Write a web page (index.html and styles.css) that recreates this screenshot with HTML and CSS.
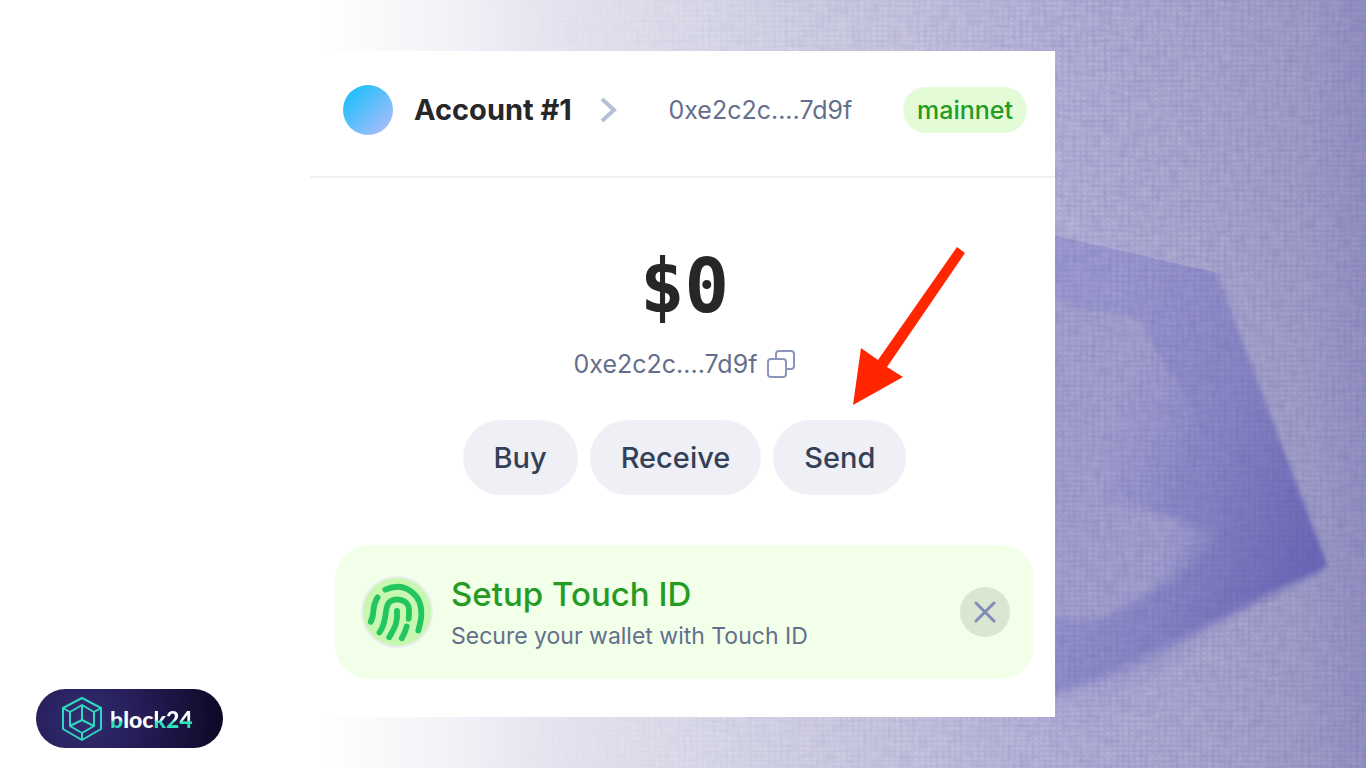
FILE: index.html
```html
<!DOCTYPE html>
<html lang="en">
<head>
  <meta charset="UTF-8" />
  <meta name="viewport" content="width=device-width, initial-scale=1.0"/>
  <title>Wallet</title>
  <link rel="stylesheet" href="styles.css">
</head>
<body>
  <div class="page">

    <!-- Backdrop -->
    <svg class="backdrop" viewBox="0 0 1366 768" preserveAspectRatio="xMaxYMid slice" aria-hidden="true">
      <defs>
        <linearGradient id="wash" x1="320" x2="1366" y1="0" y2="0" gradientUnits="userSpaceOnUse">
          <stop offset="0" stop-color="#ffffff"/>
          <stop offset="0.1" stop-color="#f5f5f9"/>
          <stop offset="0.2" stop-color="#e8e8f2"/>
          <stop offset="0.38" stop-color="#dadae9"/>
          <stop offset="0.55" stop-color="#cac8e0"/>
          <stop offset="0.7" stop-color="#b7b5da"/>
          <stop offset="0.85" stop-color="#acaad0"/>
          <stop offset="0.94" stop-color="#a3a1ca"/>
          <stop offset="1" stop-color="#9693c4"/>
        </linearGradient>
        <linearGradient id="outer" x1="1056" x2="1320" y1="440" y2="540" gradientUnits="userSpaceOnUse">
          <stop offset="0" stop-color="#9f9cd2"/>
          <stop offset="0.55" stop-color="#8a87c6"/>
          <stop offset="1" stop-color="#6d68b8"/>
        </linearGradient>
        <linearGradient id="glow" x1="1130" x2="1080" y1="600" y2="745" gradientUnits="userSpaceOnUse">
          <stop offset="0" stop-color="#9b98ce"/>
          <stop offset="1" stop-color="#9b98ce" stop-opacity="0"/>
        </linearGradient>
        <linearGradient id="inner" x1="1110" x2="1205" y1="390" y2="430" gradientUnits="userSpaceOnUse">
          <stop offset="0" stop-color="#a6a4d0"/>
          <stop offset="1" stop-color="#a6a4d0" stop-opacity="0"/>
        </linearGradient>
        <linearGradient id="low" x1="1110" x2="1220" y1="510" y2="550" gradientUnits="userSpaceOnUse">
          <stop offset="0" stop-color="#a5a3d0"/>
          <stop offset="0.5" stop-color="#a5a3d0"/>
          <stop offset="1" stop-color="#a5a3d0" stop-opacity="0"/>
        </linearGradient>
        <filter id="warp" x="0" y="0" width="100%" height="100%" color-interpolation-filters="sRGB">
          <feTurbulence type="fractalNoise" baseFrequency="0.25 0.06" numOctaves="1" seed="4"/>
          <feColorMatrix values="0 0 0 0 0.3  0 0 0 0 0.29  0 0 0 0 0.58  0 0 0 0.24 -0.09"/>
        </filter>
        <filter id="weft" x="0" y="0" width="100%" height="100%" color-interpolation-filters="sRGB">
          <feTurbulence type="fractalNoise" baseFrequency="0.06 0.25" numOctaves="1" seed="9"/>
          <feColorMatrix values="0 0 0 0 0.3  0 0 0 0 0.29  0 0 0 0 0.58  0 0 0 0.24 -0.09"/>
        </filter>
        <pattern id="threads" width="6" height="5" patternUnits="userSpaceOnUse">
          <path d="M0 0h2v5H0zM2 0h4v2H2z" fill="#4d4b91" fill-opacity="0.07"/>
        </pattern>
        <linearGradient id="fade" x1="480" x2="1100" y1="0" y2="0" gradientUnits="userSpaceOnUse">
          <stop offset="0" stop-color="#000"/>
          <stop offset="1" stop-color="#fff"/>
        </linearGradient>
        <mask id="weaveMask"><path d="M320 0h1046v768H320z" fill="url(#fade)"/></mask>
        <filter id="soft1"><feGaussianBlur stdDeviation="2"/></filter>
        <filter id="soft2"><feGaussianBlur stdDeviation="5"/></filter>
        <filter id="soft3"><feGaussianBlur stdDeviation="10"/></filter>
        <clipPath id="topEdge"><path d="M1000 223L1213 272L1366 300V768H1000z"/></clipPath>
      </defs>
      <path d="M320 0h1046v768H320z" fill="url(#wash)"/>
      <g clip-path="url(#topEdge)">
        <path d="M1040 560L1250 590L1170 660L1075 730H1040z" fill="url(#glow)" filter="url(#soft3)"/>
        <path d="M1040 215L1213 266L1324 568L1210 625L1110 675L1040 700z" fill="url(#outer)" filter="url(#soft2)"/>
        <path d="M1040 220L1213 268L1327 566L1240 600L1040 610z" fill="url(#outer)" filter="url(#soft1)"/>
        <path d="M1000 290L1125 316Q1142 320 1148 336L1205 430L1215 540L1120 500L1000 480z" fill="url(#inner)" filter="url(#soft1)"/>
        <path d="M1000 390H1090L1108 488Q1112 500 1130 504L1225 535L1170 580L1100 620H1000z" fill="url(#low)" filter="url(#soft2)"/>
      </g>
      <g mask="url(#weaveMask)">
        <path d="M320 0h1046v768H320z" fill="url(#threads)"/>
        <path d="M320 0h1046v768H320z" filter="url(#warp)"/>
        <path d="M320 0h1046v768H320z" filter="url(#weft)"/>
      </g>
    </svg>

    <div class="side">
      <a class="logo" href="#" aria-label="block24">
        <svg viewBox="0 0 40 46" width="40" height="46" fill="none" stroke="#2fd9c0" stroke-width="2" stroke-linejoin="round" aria-hidden="true">
          <path d="M20 2L39 12V33L20 44L1 33V12z"/>
          <path d="M8 16L20 9L32 16V30L20 37L8 30z"/>
          <path d="M20 9V24M8 30L20 24L32 30M1 12L8 16M39 12L32 16M20 37V44"/>
        </svg>
        <span class="logo-text"><span class="tint-b">b</span>loc<span class="tint">k24</span></span>
      </a>
    </div>

    <!-- Wallet panel -->
    <main class="wallet">
      <header class="account-bar">
        <span class="avatar"></span>
        <button class="account">Account #1
          <svg viewBox="0 0 18 26" width="18" height="26" fill="none" stroke="#b7bfd9" stroke-width="4" aria-hidden="true"><path d="M2 2L14 13L2 24"/></svg>
        </button>
        <span class="address">0xe2c2c....7d9f</span>
        <span class="network">mainnet</span>
      </header>

      <section class="summary">
        <h1 class="balance">$0</h1>
        <div class="address-row">
          <span class="address">0xe2c2c....7d9f</span>
          <button class="copy" aria-label="Copy address">
            <svg viewBox="0 0 28 28" width="28" height="28" fill="none" stroke="#8b95be" stroke-width="2" aria-hidden="true">
              <rect x="1" y="9" width="18" height="18" rx="3"/>
              <path d="M9 9V4Q9 1 12 1H24Q27 1 27 4V16Q27 19 24 19H19"/>
            </svg>
          </button>
        </div>
        <div class="actions">
          <button>Buy</button>
          <button>Receive</button>
          <button>Send</button>
        </div>
      </section>

      <section class="touch-id">
        <span class="finger">
          <svg viewBox="0 0 70 70" width="68" height="68" fill="none" stroke="#22c55e" stroke-width="6" stroke-linecap="round" aria-hidden="true">
            <path d="M23 12C43 3 61 17 60 38C60 44 58 49 57 54"/>
            <path d="M15 20C8 31 13 36 8 45"/>
            <path d="M17 56C28 41 18 23 35 22C49 23 48 32 47 42"/>
            <path d="M35 34C36 47 32 52 27 61"/>
            <path d="M45 50Q43 57 40 62"/>
          </svg>
        </span>
        <div class="touch-text">
          <h2>Setup Touch ID</h2>
          <p>Secure your wallet with Touch ID</p>
        </div>
        <button class="close" aria-label="Close">
          <svg viewBox="0 0 22 22" width="22" height="22" fill="none" stroke="#7f8bb9" stroke-width="3" stroke-linecap="round" aria-hidden="true"><path d="M2 2L20 20M20 2L2 20"/></svg>
        </button>
      </section>

      <svg class="arrow" viewBox="0 0 112 158" width="112" height="158" aria-hidden="true">
        <path d="M104 0L112 6L34 120L50 130L0 158L8 101L25 113z" fill="#ff2600"/>
      </svg>
    </main>

  </div>
</body>
</html>
```
FILE: styles.css
```css
* { box-sizing: border-box; }
body {
  margin: 0;
  background-color: #fff;
  color: #27272a;
  font-family: Inter, sans-serif;
}

button {
  border: none;
  background: none;
  padding: 0;
  color: inherit;
  font-family: inherit;
  cursor: pointer;
}

svg { display: block; }

.page {
  position: relative;
  display: grid;
  grid-template-columns: 310fr 745fr 311fr;
  min-height: 100vh;
}

.backdrop {
  position: absolute;
  inset: 0;
  width: 100%;
  height: 100%;
}

/* Logo */
.side {
  display: flex;
  align-items: flex-end;
  padding: 20px 36px;
}

.logo {
  position: relative;
  display: flex;
  align-items: center;
  gap: 8px;
  height: 59px;
  padding: 0 30px 0 26px;
  border-radius: 30px;
  background: radial-gradient(circle at 25% 50%, #332c72, #211a50 50%, #0c0824);
  color: #fff;
  text-decoration: none;
}

.logo-text {
  font-family: Lato, sans-serif;
  font-size: 23px;
  font-weight: 900;
}

.tint-b, .tint {
  background: linear-gradient(#fff 50%, #2fe0b8 62%);
  -webkit-background-clip: text;
  background-clip: text;
  color: transparent;
}

/* Wallet */
.wallet {
  position: relative;
  align-self: center;
  padding-bottom: 38px;
  background-color: #fff;
}

.account-bar {
  display: flex;
  align-items: center;
  height: 127px;
  padding: 0 28px 8px 33px;
  border-bottom: 2px solid #f2f2f4;
}

.avatar {
  width: 50px;
  height: 50px;
  margin-right: 21px;
  border-radius: 50%;
  background: linear-gradient(135deg, #18c0fb 10%, #b3bcfb 95%);
}

.account {
  display: flex;
  align-items: center;
  gap: 28px;
  font-size: 29px;
  font-weight: 700;
}

.address {
  color: #64708b;
  font-size: 25px;
  line-height: 32px;
}

.account-bar .address { margin: 0 auto; }

.network {
  padding: 7px 14px;
  border-radius: 23px;
  background-color: #e4fbd8;
  color: #259b24;
  font-size: 25px;
  font-weight: 500;
  line-height: 32px;
}

.summary {
  display: flex;
  flex-direction: column;
  align-items: center;
  padding: 62px 0 50px 4px;
}

.balance {
  margin: 0;
  font-family: "DejaVu Sans Mono", monospace;
  font-size: 74px;
  font-weight: 700;
  line-height: 92px;
}

.address-row {
  display: flex;
  align-items: center;
  gap: 10px;
  margin: 16px 0 40px;
}

.actions {
  display: flex;
  gap: 12px;
}

.actions button {
  height: 75px;
  padding: 0 31px;
  border-radius: 38px;
  background-color: #eff0f5;
  color: #334158;
  font-size: 29px;
  font-weight: 500;
}

.touch-id {
  display: flex;
  align-items: center;
  height: 134px;
  margin: 0 21px 0 25px;
  padding: 0 24px 0 26px;
  border-radius: 34px;
  background-color: #f2ffe9;
}

.finger {
  margin-right: 18px;
  border: 2px solid #ebeef0;
  border-radius: 50%;
  background-color: #c8f7b0;
}

.touch-text h2 {
  margin: 0;
  color: #259b24;
  font-size: 33px;
  font-weight: 500;
  line-height: 44px;
}

.touch-text p {
  margin: 4px 0 0;
  color: #64708b;
  font-size: 23px;
  line-height: 32px;
}

.close {
  display: grid;
  place-items: center;
  width: 50px;
  height: 50px;
  margin-left: auto;
  border-radius: 50%;
  background-color: #dae5d2;
}

.arrow {
  position: absolute;
  top: 196px;
  right: 90px;
}
```
